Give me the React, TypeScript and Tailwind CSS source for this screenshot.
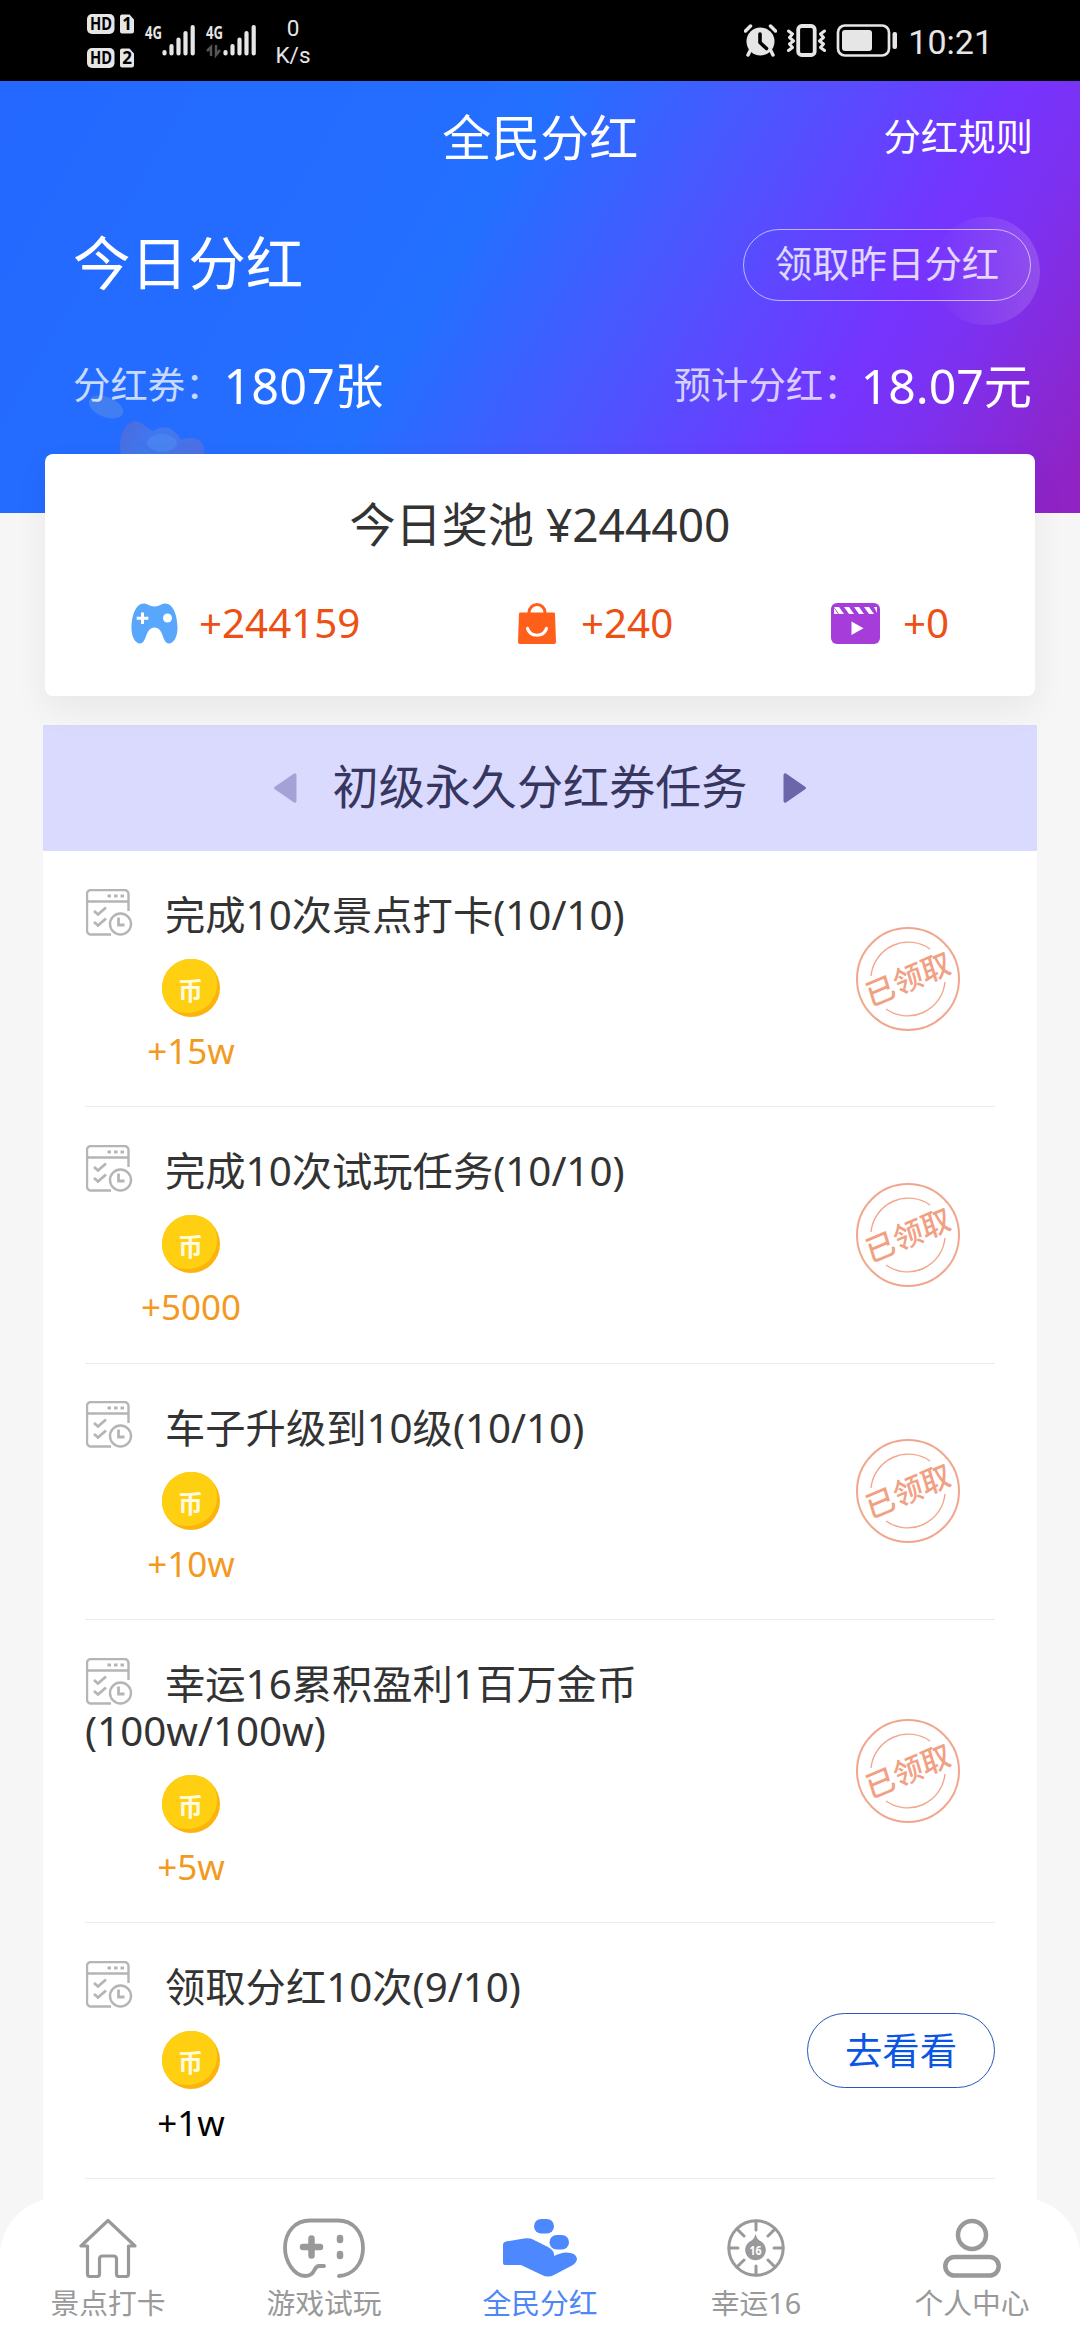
import { ReactNode } from 'react'
import clsx from 'clsx'

type Task = {
  title: string
  progress: string
  reward: string
  claimed: boolean
}

const tasks: Task[] = [
  { title: '完成10次景点打卡', progress: '(10/10)', reward: '+15w', claimed: true },
  { title: '完成10次试玩任务', progress: '(10/10)', reward: '+5000', claimed: true },
  { title: '车子升级到10级', progress: '(10/10)', reward: '+10w', claimed: true },
  { title: '幸运16累积盈利1百万金币', progress: '(100w/100w)', reward: '+5w', claimed: true },
  { title: '领取分红10次', progress: '(9/10)', reward: '+1w', claimed: false },
]

function NetworkBadge({ n }: { n: string }) {
  return (
    <svg className="overflow-visible" width="48" height="20" viewBox="0 0 48 20">
      <rect width="27.500" height="20" rx="5" fill="#e6e6e6" />
      <text x="3" y="16" fontSize="17" fontWeight="700" textLength="22" lengthAdjust="spacingAndGlyphs" fill="#000">HD</text>
      <path d="M35 .5h7.500l4.500 5V17a2.500 2.500 0 0 1-2.500 2.500H35a2 2 0 0 1-2-2v-15a2 2 0 0 1 2-2Z" fill="#e6e6e6" />
      <text x="40" y="16" fontSize="17" fontWeight="700" textAnchor="middle" fill="#000">{n}</text>
    </svg>
  )
}

function Signal({ arrows }: { arrows?: boolean }) {
  return (
    <svg className="overflow-visible" width="51" height="32" viewBox="0 0 51 32">
      <text x="0" y="14.500" fontSize="18" fontWeight="700" textLength="17" lengthAdjust="spacingAndGlyphs" fill="#e6e6e6">4G</text>
      {arrows && <path d="M5 32V23L1 27M10 21v10l4-5" fill="none" stroke="#555" strokeWidth="2.500" />}
      <g stroke="#e6e6e6" strokeWidth="4.200" strokeLinecap="round">
        <path d="M19.500 28v1.500M26.500 22v7.500M33.500 15.500v14M40.500 9v20.500M47.700 3v26.500" />
      </g>
    </svg>
  )
}

function StatusBar() {
  return (
    <div className="flex h-[81px] items-start bg-black pl-[87px] text-[#e6e6e6]">
      <div className="mt-[14px] flex flex-col gap-[14px]">
        <NetworkBadge n="1" />
        <NetworkBadge n="2" />
      </div>
      <div className="mt-[24px] ml-[10px] flex gap-[10px]">
        <Signal />
        <Signal arrows />
      </div>
      <div className="mt-[15px] ml-[17px] w-[38px] text-center font-[Roboto] text-[22.5px] leading-[27px]">
        <div>0</div>
        <div>K/s</div>
      </div>
      <div className="mt-[24px] ml-auto flex h-[33px] items-center pr-[87px]">
        <svg width="33" height="33" viewBox="0 0 33 33">
          <path d="M7 25l-3 6M26 25l3 6M1.500 7l5-5M31.500 7l-5-5" stroke="#e6e6e6" strokeWidth="3.500" strokeLinecap="round" />
          <circle cx="16.500" cy="17.500" r="14" fill="#e6e6e6" />
          <path d="M16 10v8.500l6.500 6" fill="none" stroke="#000" strokeWidth="3.600" strokeLinecap="round" strokeLinejoin="round" />
        </svg>
        <svg className="ml-[10px]" width="39" height="33" viewBox="0 0 39 33" fill="none" stroke="#e6e6e6" strokeLinecap="round" strokeLinejoin="round">
          <rect x="11.200" y="2" width="16.500" height="29" rx="3.500" strokeWidth="3.800" />
          <path d="M1.500 7l4 3-3 3.500 4 3.500-4 3 3 3.500-4 3M37.500 7l-4 3 3 3.500-4 3.500 4 3-3 3.500 4 3" strokeWidth="3" />
        </svg>
        <svg className="ml-[10px]" width="62" height="33" viewBox="0 0 62 33">
          <rect x="2" y="1.500" width="51" height="30" rx="7" fill="none" stroke="#e6e6e6" strokeWidth="2.700" />
          <rect x="6" y="6" width="30" height="21" rx="3" fill="#e6e6e6" />
          <rect x="56.500" y="8" width="4.500" height="17" rx="2" fill="#e6e6e6" />
        </svg>
        <span className="mt-[3px] ml-[10px] font-[Roboto] text-[34px] leading-[34px]">10:21</span>
      </div>
    </div>
  )
}

function HeaderDecoration() {
  return (
    <svg className="absolute inset-0" width="1080" height="432" viewBox="0 0 1080 432">
      <defs>
        <linearGradient id="bubble">
          <stop offset="0" stopColor="#fff" stopOpacity="0" />
          <stop offset="1" stopColor="#fff" stopOpacity=".15" />
        </linearGradient>
        <linearGradient id="ingot" x1="0" y1="0" x2="1" y2=".3">
          <stop offset="0" stopColor="#5368d6" />
          <stop offset=".5" stopColor="#437aee" />
          <stop offset="1" stopColor="#5070e2" />
        </linearGradient>
      </defs>
      <circle cx="986" cy="190" r="54" fill="url(#bubble)" />
      <ellipse cx="106" cy="326" rx="18" ry="10" transform="rotate(22 106 326)" fill="#4a84ee" opacity=".75" />
      <path d="M121 373c-3-14 2-30 13-33 9 0 12 8 20 10 9-7 20-4 27 9 14-5 24 0 23 14Z" fill="url(#ingot)" opacity=".9" />
      <path d="M131 348c5 12 14 19 27 25" fill="none" stroke="#3f74ee" strokeWidth="4" opacity=".7" />
      <ellipse cx="162" cy="362" rx="15" ry="9" fill="#4f8af4" opacity=".6" />
    </svg>
  )
}

function Header() {
  return (
    <header className="relative h-[432px] bg-[linear-gradient(120deg,#2468ff_0%,#246eff_36%,#2370ff_42%,#4a57ff_58%,#7534ff_77%,#7c31f0_84%,#9023c4_98%)] text-white">
      <HeaderDecoration />
      <div className="relative flex h-[112px] items-center pr-[47px]">
        <h1 className="flex-1 pl-[197px] text-center text-[49px] leading-[60px]">全民分红</h1>
        <span className="text-[37.4px] leading-[48px]">分红规则</span>
      </div>
      <div className="relative mt-[36px] flex h-[72px] items-center justify-between pr-[49px] pl-[73px]">
        <h2 className="mb-[5px] text-[57.6px] leading-[72px]">今日分红</h2>
        <button className="h-[72px] w-[288px] rounded-full border border-white/60 pb-[3px] text-[37.4px] leading-[66px] text-white/80">
          领取昨日分红
        </button>
      </div>
      <div className="relative mt-[52px] flex h-[64px] items-center justify-between pr-[48px] pl-[73px] leading-[64px]">
        <p className="flex items-center">
          <span className="text-[37.4px] text-white/75">分红券：</span>
          <span className="ml-px text-[48.6px]">1807张</span>
        </p>
        <p className="flex items-center">
          <span className="text-[37.4px] text-white/75">预计分红：</span>
          <span className="text-[48.2px]">18.07元</span>
        </p>
      </div>
    </header>
  )
}

function PoolItem({ icon, value }: { icon: ReactNode; value: string }) {
  return (
    <div className="flex items-center">
      {icon}
      <span className="text-[40.3px] leading-[48px] text-[#ec5015]">{value}</span>
    </div>
  )
}

function PrizePool() {
  return (
    <section className="relative mx-[45px] mt-[-59px] h-[242px] rounded-[8px] bg-white pt-[41px] shadow-[0_14px_34px_rgba(0,0,0,0.06)]">
      <p className="text-center text-[46.1px] leading-[60px] text-[#333]">今日奖池 ¥244400</p>
      <div className="mt-[44px] flex justify-between pr-[86px] pl-[86px]">
        <PoolItem
          value="+244159"
          icon={
            <svg className="mr-[21px]" width="47" height="41" viewBox="0 0 47 41">
              <path d="M13 .5c4 0 5 3 10.500 3S30 .5 34 .5C43 .5 46.500 14 46.500 25c0 9-4 15.500-8.500 15.500-7 0-5-16-14.500-16S16 40.500 9 40.500C4.500 40.500.5 34 .5 25 .5 14 4 .5 13 .5Z" fill="#58a7fd" />
              <path d="M11.500 9.500v11.500M5.700 15.200h11.600" stroke="#fff" strokeWidth="3" />
              <circle cx="36.500" cy="15" r="4.500" fill="#fff" />
            </svg>
          }
        />
        <PoolItem
          value="+240"
          icon={
            <svg className="mr-[25px]" width="38" height="41" viewBox="0 0 38 41">
              <path d="M11 12V9.500a8 8 0 0 1 16 0V12" fill="none" stroke="#ff5f1a" strokeWidth="3" />
              <path d="M2.500 9.500h33a1.500 1.500 0 0 1 1.500 1.300l1 28.200a2 2 0 0 1-2 2H2a2 2 0 0 1-2-2l1-28.200a1.500 1.500 0 0 1 1.500-1.300Z" fill="#ff5f1a" />
              <path d="M9.500 25.500c3 9 16 9 19 0" fill="none" stroke="#fff" strokeWidth="3.200" strokeLinecap="round" />
            </svg>
          }
        />
        <PoolItem
          value="+0"
          icon={
            <svg className="mr-[23px]" width="49" height="41" viewBox="0 0 49 41">
              <rect width="49" height="41" rx="6" fill="#a63ddb" />
              <path d="M3 4h5l5 7H8M13 4h5l5 7h-5ZM23 4h5l5 7h-5ZM33 4h5l5 7h-5ZM43 4h3v6ZM3 5l4 6H3Z" fill="#fff" />
              <path d="M20.500 18.500v13.500l12-6.700Z" fill="#fff" />
            </svg>
          }
        />
      </div>
    </section>
  )
}

function TaskIcon() {
  return (
    <svg className="-mt-[20px] -mb-[6px] mr-[32px] ml-px inline-block align-middle" width="47" height="47" viewBox="0 0 47 47" fill="none" stroke="#b5b5b5" strokeWidth="2.400">
      <path d="M42.500 22V5a4 4 0 0 0-4-4H5a4 4 0 0 0-4 4v36.500a4 4 0 0 0 4 4h20" />
      <path d="M1 12.500h41.500" />
      <path d="M21.500 7h3.500M28 7h3.500M34.500 7H38" strokeWidth="3" />
      <path d="M8 22l4 3.500 8-7M8 33l4 3.500 8-7" strokeWidth="2.800" />
      <circle cx="34.500" cy="35" r="10.500" />
      <path d="M32.500 28.500v7.500h6" strokeWidth="2.800" />
    </svg>
  )
}

function Coin() {
  return (
    <svg width="58" height="58" viewBox="0 0 58 58">
      <circle cx="29" cy="29" r="29" fill="#fcb40c" />
      <path d="M29 0c16 0 26 10 26 25 0 17-13 29-30 29C9 54 0 43 0 29 0 13 13 0 29 0Z" fill="#ffd012" />
      <text x="28.500" y="40.500" textAnchor="middle" fontSize="25" fontWeight="700" fill="#fffbe0">币</text>
    </svg>
  )
}

function ClaimedStamp() {
  return (
    <svg width="104" height="104" viewBox="-52 -52 104 104">
      <g fill="none" stroke="#f2a68e">
        <circle r="51" strokeWidth="2" />
        <path d="M-37-3A37.500 37.500 0 0 1 22-30M-22 30A37.500 37.500 0 0 0 37 3" strokeWidth="1.400" />
      </g>
      <text transform="rotate(-23) skewX(-6)" y="11" textAnchor="middle" fontSize="30" fontWeight="500" fill="#f2a083">已领取</text>
    </svg>
  )
}

function TaskRow({ task }: { task: Task }) {
  return (
    <li className="flex border-b border-[#ebebeb]">
      <div className="flex-1 pt-[40px] pb-[35.3px]">
        <h3 className="text-[40.3px] leading-[47px] text-[#333]">
          <TaskIcon />
          {task.title}
          <span className="inline-block">{task.progress}</span>
        </h3>
        <div className="mt-[21px] flex w-[212px] flex-col items-center">
          <Coin />
          <span className={clsx('mt-[14px] text-[35px] leading-[40px]', task.claimed ? 'text-[#f39a1e]' : 'text-black')}>
            {task.reward}
          </span>
        </div>
      </div>
      <div className="flex w-[188px] items-center justify-end">
        {task.claimed ? (
          <div className="flex w-[174px] justify-center">
            <ClaimedStamp />
          </div>
        ) : (
          <button className="h-[75px] w-[188px] rounded-full border border-[#2458b8] text-[37.4px] leading-[70px] text-[#0a55e6]">
            去看看
          </button>
        )}
      </div>
    </li>
  )
}

function TaskList() {
  return (
    <section className="mx-[43px] mt-[29px] flex-1 bg-white">
      <div className="flex h-[126px] items-center justify-center bg-[#dadaff]">
        <svg width="24" height="32" viewBox="0 0 24 32">
          <path d="M21 1.500 1.500 15q-1 1 0 2L21 30.500q2.500 1 2.500-2v-25q0-3-2.500-2Z" fill="#a5a1d6" />
        </svg>
        <h2 className="mx-[36px] -mt-[3px] text-[46.1px] leading-[60px] text-[#37365f]">初级永久分红券任务</h2>
        <svg width="24" height="32" viewBox="0 0 24 32">
          <path d="M3 1.500 22.500 15q1 1 0 2L3 30.500q-2.500 1-2.500-2v-25q0-3 2.500-2Z" fill="#6b65aa" />
        </svg>
      </div>
      <ul className="mx-[42px]">
        {tasks.map((task) => (
          <TaskRow key={task.title} task={task} />
        ))}
      </ul>
    </section>
  )
}

const tabs = [
  {
    label: '景点打卡',
    icon: (
      <svg width="58" height="60" viewBox="0 0 58 60" fill="none" stroke="#999" strokeWidth="3.200" strokeLinejoin="round">
        <path d="M29 2.500 2 28h6.500v28q0 2.500 2.500 2.500h7q2.500 0 2.500-2.500V41q0-3 3-3h11q3 0 3 3v15q0 2.500 2.500 2.500h7q2.500 0 2.500-2.500V28H56Z" />
      </svg>
    ),
  },
  {
    label: '游戏试玩',
    icon: (
      <svg width="82" height="60" viewBox="0 0 82 60" fill="none" stroke="#999" strokeLinecap="round">
        <path d="M41 48h-5c-6 0-3 10-14 10C11 58 2 43 2 30 2 14 12 2.500 27 2.500h28C70 2.500 80 14 80 30S70 57 56 58" strokeWidth="3.800" />
        <path d="M28.500 20.500v17M20 29h17" strokeWidth="6.500" />
        <path d="M57 20v2M57 36v2" strokeWidth="6.500" />
      </svg>
    ),
  },
  {
    label: '全民分红',
    active: true,
    icon: (
      <svg width="74" height="60" viewBox="0 0 74 60" fill="#4e88ff">
        <path d="M0 27q0-3 3-3.500L21 20.500q5-1 9 1l15 7.500q7 4 6 9 7-3.500 12-3.500 10 0 11 6 0 4-5 7L51 57q-6 3-12 0L18 47H2q-2 0-2-2Z" />
        <rect x="31" y="1" width="20" height="14.500" rx="7.200" />
        <rect x="46.500" y="17" width="19.500" height="14.500" rx="7.200" />
      </svg>
    ),
  },
  {
    label: '幸运16',
    icon: (
      <svg width="58" height="60" viewBox="0 0 58 60">
        <g fill="none" stroke="#999" strokeWidth="3">
          <circle cx="29" cy="30" r="27.200" />
          <path d="M29 3v9M29 57v-9M2 30h9M56 30h-9M10 11l7 7M48 11l-7 7M10 49l7-7M48 49l-7-7" strokeLinecap="round" />
        </g>
        <path d="M28.500 16q1.500 5 4 6.500a10.300 10.300 0 1 1-8 0q2.500-1.500 4-6.500Z" fill="#999" />
        <text x="28.500" y="37" textAnchor="middle" fontSize="12.500" fontWeight="700" textLength="12" lengthAdjust="spacingAndGlyphs" fill="#fff">16</text>
      </svg>
    ),
  },
  {
    label: '个人中心',
    icon: (
      <svg width="58" height="60" viewBox="0 0 58 60" fill="none" stroke="#999" strokeWidth="4.500">
        <circle cx="29" cy="17" r="14" />
        <rect x="2.300" y="39" width="53.400" height="18.500" rx="9.200" />
      </svg>
    ),
  },
]

function TabBar() {
  return (
    <nav className="absolute inset-x-0 bottom-0 flex h-[142px] rounded-t-[58px] bg-white">
      {tabs.map((tab) => (
        <div key={tab.label} className="flex flex-1 flex-col items-center pt-[20px]">
          {tab.icon}
          <span className={clsx('mt-[7px] text-[28.8px] leading-[36px]', tab.active ? 'text-[#4f86f7]' : 'text-[#999]')}>
            {tab.label}
          </span>
        </div>
      ))}
    </nav>
  )
}

export default function App() {
  return (
    <div className="relative flex h-[2340px] w-[1080px] flex-col overflow-hidden bg-[#f6f6f6] font-['Noto_Sans','Noto_Sans_CJK_SC',sans-serif]">
      <StatusBar />
      <Header />
      <PrizePool />
      <TaskList />
      <TabBar />
    </div>
  )
}
